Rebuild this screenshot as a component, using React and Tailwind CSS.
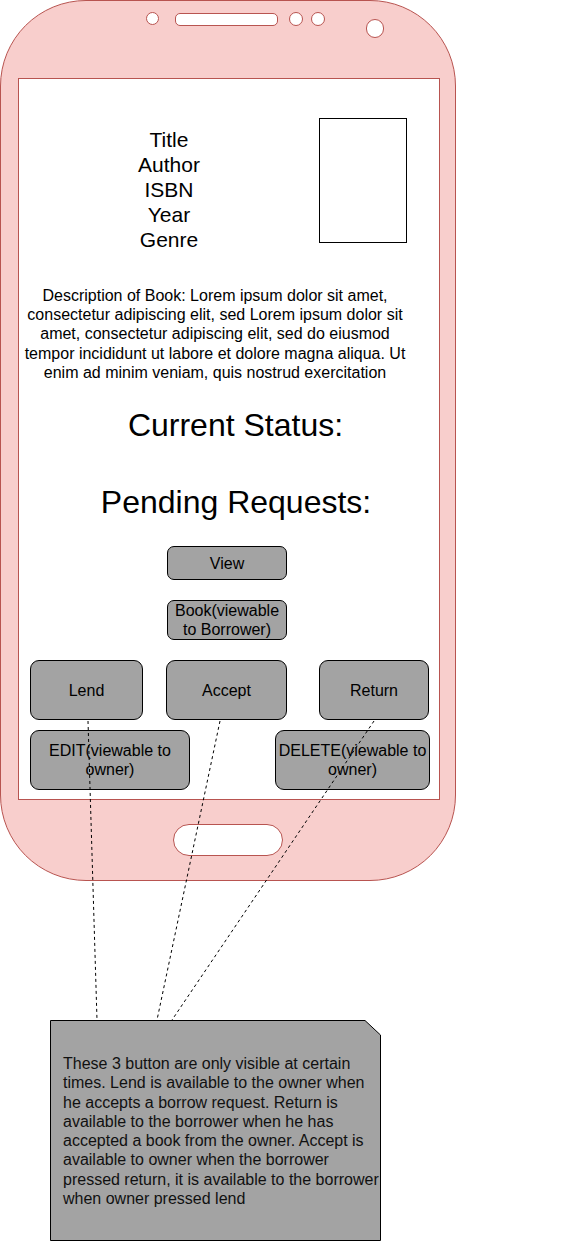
import React from 'react';

const btn =
  'flex items-center justify-center text-center text-[16px] leading-[19px] text-black bg-[#a3a3a3] border border-black';

export default function App() {
  return (
    <div className="relative w-[574px] h-[1241px] bg-white overflow-hidden font-['Liberation_Sans',Arial,sans-serif] text-black">
      {/* Phone body */}
      <div className="w-[456px] h-[881px] rounded-[86px] border border-[#b85450] bg-[#f8cecc] flex flex-col">
        {/* Speaker, sensors, camera */}
        <div className="h-[77px] pt-[11px] pl-[145px] flex items-start">
          <div className="w-[13px] h-[13px] rounded-full border border-[#b85450] bg-white" />
          <div className="ml-[16px] mt-[1px] w-[103px] h-[13px] rounded-[5px] border border-[#b85450] bg-white" />
          <div className="ml-[11px] w-[14px] h-[14px] rounded-full border border-[#b85450] bg-white" />
          <div className="ml-[8px] w-[14px] h-[14px] rounded-full border border-[#b85450] bg-white" />
          <div className="ml-[41px] mt-[7px] w-[18px] h-[19px] rounded-full border border-[#b85450] bg-white" />
        </div>

        {/* Screen */}
        <div className="ml-[17px] w-[422px] h-[722px] border border-[#b85450] bg-white flex flex-col">
          <div className="flex pt-[39px]">
            <div className="w-[300px] pt-[9px] text-center text-[21px] leading-[25px]">
              Title<br />Author<br />ISBN<br />Year<br />Genre
            </div>
            <div className="w-[88px] h-[125px] border border-black" />
          </div>

          <p className="mt-[34px] pr-[28px] text-center text-[16px] leading-[19.2px]">
            Description of Book: Lorem ipsum dolor sit amet,<br />
            consectetur adipiscing elit, sed Lorem ipsum dolor sit<br />
            amet, consectetur adipiscing elit, sed do eiusmod<br />
            tempor incididunt ut labore et dolore magna aliqua. Ut<br />
            enim ad minim veniam, quis nostrud exercitation
          </p>

          <h2 className="mt-[24px] pl-[13px] text-center text-[32px] leading-[38px]">Current Status:</h2>
          <h2 className="mt-[39px] pl-[14px] text-center text-[32px] leading-[38px]">Pending Requests:</h2>

          <div className={`${btn} mt-[25px] ml-[148px] w-[120px] h-[34px] rounded-[7px]`}>View</div>
          <div className={`${btn} mt-[20px] ml-[148px] w-[120px] h-[40px] rounded-[7px]`}>
            Book(viewable<br />to Borrower)
          </div>

          <div className="mt-[20px] ml-[11px] flex">
            <div className={`${btn} w-[113px] h-[60px] rounded-[9px]`}>Lend</div>
            <div className={`${btn} ml-[23px] w-[121px] h-[60px] rounded-[9px]`}>Accept</div>
            <div className={`${btn} ml-[32px] w-[110px] h-[60px] rounded-[9px]`}>Return</div>
          </div>
          <div className="mt-[10px] ml-[11px] flex">
            <div className={`${btn} w-[160px] h-[60px] rounded-[9px]`}>
              EDIT(viewable to<br />owner)
            </div>
            <div className={`${btn} ml-[85px] w-[155px] h-[60px] rounded-[9px]`}>
              DELETE(viewable to<br />owner)
            </div>
          </div>
        </div>

        {/* Home button */}
        <div className="mt-[24px] ml-[172px] w-[110px] h-[32px] rounded-full border border-[#b85450] bg-white" />
      </div>

      {/* Note */}
      <div className="relative mt-[139px] ml-[50px] w-[331px] h-[221px]">
        <svg className="absolute inset-0" width="331" height="221" viewBox="0 0 331 221">
          <polygon
            points="0.5,0.5 315,0.5 330.5,15 330.5,220.5 0.5,220.5"
            fill="#a3a3a3"
            stroke="#000"
            strokeWidth="1"
          />
        </svg>
        <p className="relative pl-[13px] pt-[34px] text-[16px] leading-[19.3px] whitespace-nowrap text-[#111]">
          These 3 button are only visible at certain<br />
          times. Lend is available to the owner when<br />
          he accepts a borrow request. Return is<br />
          available to the borrower when he has<br />
          accepted a book from the owner. Accept is<br />
          available to owner when the borrower<br />
          pressed return, it is available to the borrower<br />
          when owner pressed lend
        </p>
      </div>

      {/* Connectors */}
      <svg
        className="absolute inset-0 pointer-events-none"
        width="574"
        height="1241"
        viewBox="0 0 574 1241"
      >
        <g stroke="#000" strokeWidth="1" strokeDasharray="3 3" fill="none">
          <line x1="88" y1="721" x2="97" y2="1020" />
          <line x1="220" y1="721" x2="157" y2="1020" />
          <line x1="374" y1="721" x2="172" y2="1020" />
        </g>
      </svg>
    </div>
  );
}
